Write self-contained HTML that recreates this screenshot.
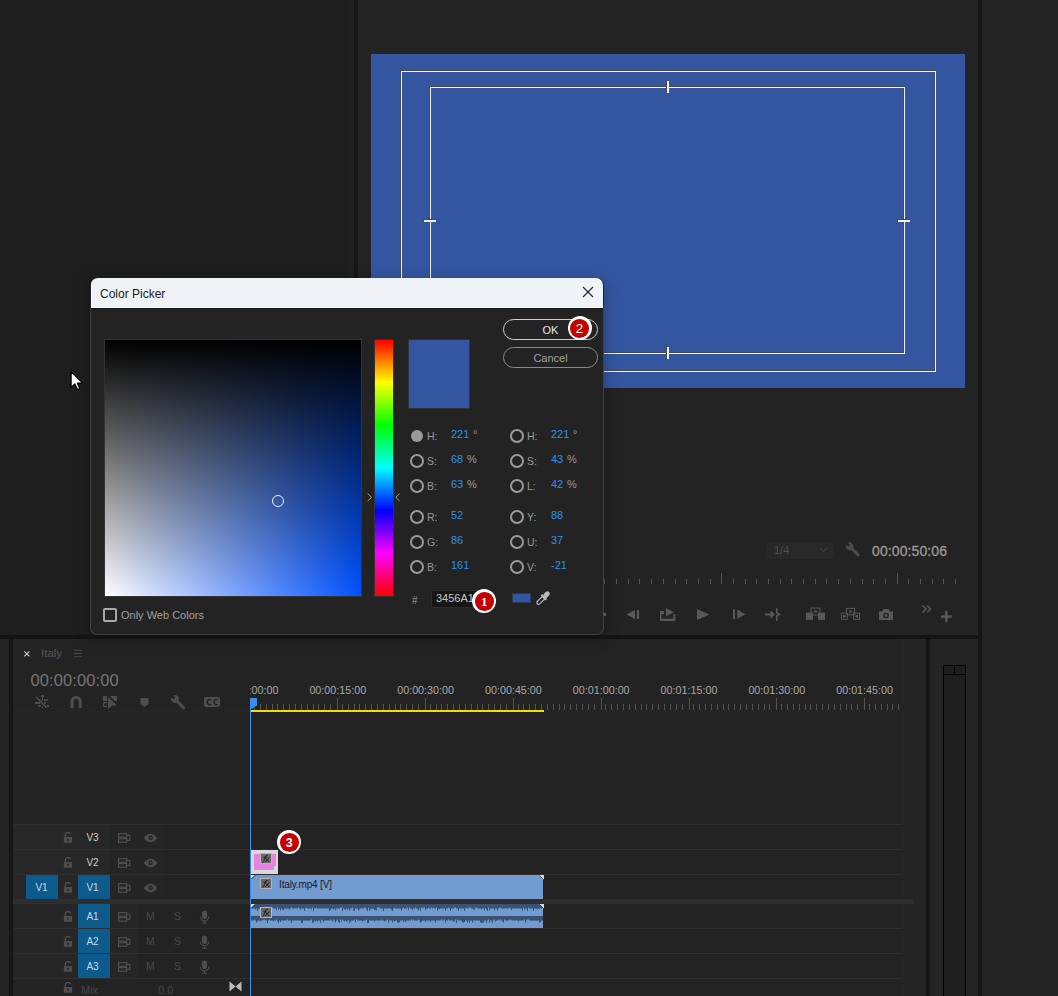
<!DOCTYPE html>
<html><head><meta charset="utf-8">
<style>
*{margin:0;padding:0;box-sizing:border-box}
html,body{width:1058px;height:996px;overflow:hidden;background:#1e1e1e;font-family:"Liberation Sans",sans-serif}
.a{position:absolute;white-space:nowrap}
</style></head>
<body>
<div class="a" style="left:0;top:0;width:354px;height:635px;background:#1e1e1e"></div>
<div class="a" style="left:349px;top:0;width:5px;height:635px;background:#202020"></div>
<div class="a" style="left:354px;top:0;width:4px;height:635px;background:#161616"></div>
<div class="a" style="left:358px;top:0;width:620px;height:635px;background:#232323"></div>
<div class="a" style="left:978px;top:0;width:4px;height:996px;background:#161616"></div>
<div class="a" style="left:982px;top:0;width:76px;height:996px;background:#232323"></div>
<div class="a" style="left:371px;top:54px;width:594px;height:334px;background:#3456a1"></div>
<div class="a" style="left:401px;top:71px;width:535px;height:301px;border:1px solid #f2f0ea;box-shadow:-1px -1px 0 #4a4a4a, inset -1px -1px 0 #4a4a4a"></div>
<div class="a" style="left:430px;top:87px;width:475px;height:267px;border:1px solid #f2f0ea;box-shadow:-1px -1px 0 #4a4a4a, inset -1px -1px 0 #4a4a4a"></div>
<div class="a" style="left:666px;top:80px;width:2px;height:12px;background:#4a4a4a"></div>
<div class="a" style="left:667px;top:81px;width:2px;height:12px;background:#f2f0ea"></div>
<div class="a" style="left:666px;top:346px;width:2px;height:12px;background:#4a4a4a"></div>
<div class="a" style="left:667px;top:347px;width:2px;height:12px;background:#f2f0ea"></div>
<div class="a" style="left:423px;top:219px;width:12px;height:2px;background:#4a4a4a"></div>
<div class="a" style="left:424px;top:220px;width:12px;height:2px;background:#f2f0ea"></div>
<div class="a" style="left:897px;top:219px;width:12px;height:2px;background:#4a4a4a"></div>
<div class="a" style="left:898px;top:220px;width:12px;height:2px;background:#f2f0ea"></div>
<div class="a" style="left:767px;top:542px;width:67px;height:17px;background:#282828;border-radius:2px"></div>
<div class="a" style="left:774px;top:543px;font-size:11px;line-height:15px;color:#505050">1/4</div>
<svg class="a" style="left:819px;top:547px" width="9" height="6" viewBox="0 0 9 6"><path d="M1 1L4.5 4.5L8 1" fill="none" stroke="#4a4a4a" stroke-width="1"/></svg>
<svg class="a" style="left:840px;top:536px" width="24" height="24" viewBox="840 536 24 24"><g transform="translate(849.6,546.4) rotate(-45)"><circle r="3.8" fill="#4c4c4c"/><rect x="-1.45" y="0" width="2.9" height="13.6" rx="1.4" fill="#4c4c4c"/><rect x="-1.35" y="-4.6" width="2.7" height="3.9" fill="#232323"/></g></svg>
<div class="a" style="left:872px;top:543px;font-size:14px;line-height:16px;color:#9a9a9a;-webkit-text-stroke:0.3px #9a9a9a;letter-spacing:0.1px">00:00:50:06</div>
<svg class="a" style="left:600px;top:570px" width="360" height="16" viewBox="600 570 360 16"><rect x="604" y="579" width="1" height="5" fill="#555"/><rect x="616" y="579" width="1" height="5" fill="#555"/><rect x="628" y="579" width="1" height="5" fill="#555"/><rect x="639" y="579" width="1" height="5" fill="#555"/><rect x="651" y="579" width="1" height="5" fill="#555"/><rect x="663" y="579" width="1" height="5" fill="#555"/><rect x="675" y="579" width="1" height="5" fill="#555"/><rect x="686" y="579" width="1" height="5" fill="#555"/><rect x="698" y="579" width="1" height="5" fill="#555"/><rect x="710" y="579" width="1" height="5" fill="#555"/><rect x="721" y="573" width="1" height="11" fill="#555"/><rect x="733" y="579" width="1" height="5" fill="#555"/><rect x="745" y="579" width="1" height="5" fill="#555"/><rect x="756" y="579" width="1" height="5" fill="#555"/><rect x="768" y="579" width="1" height="5" fill="#555"/><rect x="780" y="579" width="1" height="5" fill="#555"/><rect x="791" y="579" width="1" height="5" fill="#555"/><rect x="803" y="579" width="1" height="5" fill="#555"/><rect x="815" y="579" width="1" height="5" fill="#555"/><rect x="826" y="579" width="1" height="5" fill="#555"/><rect x="838" y="579" width="1" height="5" fill="#555"/><rect x="850" y="579" width="1" height="5" fill="#555"/><rect x="862" y="579" width="1" height="5" fill="#555"/><rect x="873" y="579" width="1" height="5" fill="#555"/><rect x="885" y="579" width="1" height="5" fill="#555"/><rect x="897" y="573" width="1" height="11" fill="#555"/><rect x="908" y="579" width="1" height="5" fill="#555"/><rect x="920" y="579" width="1" height="5" fill="#555"/><rect x="932" y="579" width="1" height="5" fill="#555"/><rect x="943" y="579" width="1" height="5" fill="#555"/><rect x="955" y="579" width="1" height="5" fill="#555"/></svg>
<svg class="a" style="left:600px;top:600px" width="360" height="30" viewBox="600 600 360 30" fill="#585858">
  <path d="M626.5 614.5L635 610V619Z"/><rect x="636.8" y="610" width="2.3" height="9"/>
  <path d="M660 611H664V614H661.6V618.8H673.4V614H675.3V621H660Z"/><path d="M666 608L674 612.2L666 616.3Z"/>
  <path d="M697 609L709.4 614.5L697 620Z"/>
  <rect x="733" y="609.5" width="2" height="9.5"/><path d="M737.3 609.5L745.3 614.3L737.3 619Z"/>
  <path d="M765 613.5H770.5V610.5L775 614.5L770.5 618.5V615.5H765Z"/><path d="M776.8 608.2V613L779.6 614.5L776.8 616V621" fill="none" stroke="#585858" stroke-width="1.6"/>
  <rect x="811" y="608" width="9" height="7" fill="none" stroke="#585858" stroke-width="1"/><path d="M815.5 609.7L818 612.5H813Z"/><rect x="806" y="612.6" width="7" height="7.3"/><rect x="818" y="612.6" width="7" height="7.3"/>
  <rect x="846.6" y="608.4" width="8" height="6.4" fill="none" stroke="#585858" stroke-width="1"/><path d="M850.6 609.8L852.8 612.6H848.4Z"/>
  <path d="M841.3 613.1H847.3V619.4H841.3Z M853.4 613.1H859.5V619.4H853.4Z" fill="none" stroke="#585858" stroke-width="1"/><path d="M842.8 614.4L846.6 616.3L842.8 618.2Z M858 614.4L854.2 616.3L858 618.2Z"/>
  <path d="M879 611.5H882L883.5 609H888.5L890 611.5H893V620H879Z"/><circle cx="886" cy="615.5" r="2.8" fill="#232323"/><circle cx="886" cy="615.5" r="1.4"/>
  <path d="M922.5 605.5L926 609L922.5 612.5 M927 605.5L930.5 609L927 612.5" fill="none" stroke="#585858" stroke-width="1.5"/>
  <rect x="941" y="615.3" width="10.8" height="2.5"/><rect x="945.1" y="610.8" width="2.5" height="11.4"/>
</svg>
<div class="a" style="left:0;top:635px;width:978px;height:4px;background:#141414"></div>
<div class="a" style="left:0;top:639px;width:9px;height:357px;background:#232323"></div>
<div class="a" style="left:9px;top:639px;width:4px;height:357px;background:#161616"></div>
<div class="a" style="left:13px;top:639px;width:913px;height:357px;background:#232323"></div>
<div class="a" style="left:902px;top:639px;width:24px;height:357px;background:#252525"></div>
<div class="a" style="left:13px;top:711px;width:890px;height:1px;background:#262626"></div>
<div class="a" style="left:926px;top:639px;width:4px;height:357px;background:#161616"></div>
<div class="a" style="left:930px;top:639px;width:48px;height:357px;background:#242424"></div>
<div class="a" style="left:943px;top:665px;width:23px;height:340px;background:#1e1e1e;border:1px solid #000"></div>
<div class="a" style="left:944px;top:674px;width:21px;height:1px;background:#000"></div>
<div class="a" style="left:954px;top:666px;width:1px;height:8px;background:#000"></div>
<svg class="a" style="left:22px;top:649px" width="10" height="10" viewBox="0 0 10 10"><path d="M2.4 2.4L7.4 7.4M7.4 2.4L2.4 7.4" stroke="#cfcfcf" stroke-width="1.1"/></svg>
<div class="a" style="left:41px;top:646px;font-size:11.5px;line-height:14px;color:#575757">Italy</div>
<svg class="a" style="left:73px;top:649px" width="10" height="9" viewBox="0 0 10 9"><path d="M1 1.3H9M1 4.5H9M1 7.7H9" stroke="#4c4c4c" stroke-width="0.9"/></svg>
<div class="a" style="left:30.5px;top:671px;font-size:16.5px;line-height:19px;color:#757575;letter-spacing:0.1px">00:00:00:00</div>
<svg class="a" style="left:30px;top:690px" width="200" height="22" viewBox="30 690 200 22" fill="#4e4e4e">
  <path d="M36.6 697.5L46.4 707.4" stroke="#4e4e4e" stroke-width="1.5" stroke-linecap="round"/>
  <rect x="41" y="695" width="3" height="2"/><rect x="42" y="697" width="1" height="4"/><rect x="44" y="699.2" width="4" height="1.6"/><rect x="35" y="702" width="5" height="2"/><rect x="44.2" y="702.3" width="1.7" height="1.7"/><rect x="38" y="705.2" width="2.8" height="1.7"/><rect x="42" y="706" width="1" height="2"/><rect x="46.9" y="705.2" width="2" height="1.7"/>
  <path d="M70.5 708V701.5A5.6 5.6 0 0 1 81.7 701.5V708H78.8V701.5A2.7 2.7 0 0 0 73.4 701.5V708Z"/>
  <rect x="103" y="696" width="4" height="5"/><path d="M103 702H107V703.4H104.2V705.7H107V707H103Z"/><path d="M109.6 696H117V701H114.9Z"/><path d="M108 697V709L112 705.6H117Z"/>
  <path d="M140.5 698H148.5V704L144.5 707L140.5 704Z"/>
  <g transform="translate(174.9,699) rotate(-45)"><circle r="3.8" fill="#4e4e4e"/><rect x="-1.45" y="0" width="2.9" height="14" rx="1.4" fill="#4e4e4e"/><rect x="-1.35" y="-4.6" width="2.7" height="3.9" fill="#232323"/></g>
  <rect x="204" y="697" width="16" height="10" rx="2"/>
  <path d="M211 699.8A2.6 2.6 0 1 0 211 704.4M217.7 699.8A2.6 2.6 0 1 0 217.7 704.4" fill="none" stroke="#232323" stroke-width="1.5"/>
</svg>
<svg class="a" style="left:250px;top:680px" width="653" height="32" viewBox="250 680 653 32"><rect x="250" y="698" width="1" height="12" fill="#555"/><rect x="337" y="698" width="1" height="12" fill="#555"/><rect x="425" y="698" width="1" height="12" fill="#555"/><rect x="513" y="698" width="1" height="12" fill="#555"/><rect x="601" y="698" width="1" height="12" fill="#555"/><rect x="689" y="698" width="1" height="12" fill="#555"/><rect x="776" y="698" width="1" height="12" fill="#555"/><rect x="864" y="698" width="1" height="12" fill="#555"/><rect x="254" y="704" width="1" height="6" fill="#555"/><rect x="260" y="704" width="1" height="6" fill="#555"/><rect x="266" y="704" width="1" height="6" fill="#555"/><rect x="272" y="704" width="1" height="6" fill="#555"/><rect x="277" y="704" width="1" height="6" fill="#555"/><rect x="283" y="704" width="1" height="6" fill="#555"/><rect x="289" y="704" width="1" height="6" fill="#555"/><rect x="295" y="704" width="1" height="6" fill="#555"/><rect x="301" y="704" width="1" height="6" fill="#555"/><rect x="307" y="704" width="1" height="6" fill="#555"/><rect x="313" y="704" width="1" height="6" fill="#555"/><rect x="318" y="704" width="1" height="6" fill="#555"/><rect x="324" y="704" width="1" height="6" fill="#555"/><rect x="330" y="704" width="1" height="6" fill="#555"/><rect x="342" y="704" width="1" height="6" fill="#555"/><rect x="348" y="704" width="1" height="6" fill="#555"/><rect x="354" y="704" width="1" height="6" fill="#555"/><rect x="359" y="704" width="1" height="6" fill="#555"/><rect x="365" y="704" width="1" height="6" fill="#555"/><rect x="371" y="704" width="1" height="6" fill="#555"/><rect x="377" y="704" width="1" height="6" fill="#555"/><rect x="383" y="704" width="1" height="6" fill="#555"/><rect x="389" y="704" width="1" height="6" fill="#555"/><rect x="395" y="704" width="1" height="6" fill="#555"/><rect x="400" y="704" width="1" height="6" fill="#555"/><rect x="406" y="704" width="1" height="6" fill="#555"/><rect x="412" y="704" width="1" height="6" fill="#555"/><rect x="418" y="704" width="1" height="6" fill="#555"/><rect x="430" y="704" width="1" height="6" fill="#555"/><rect x="436" y="704" width="1" height="6" fill="#555"/><rect x="441" y="704" width="1" height="6" fill="#555"/><rect x="447" y="704" width="1" height="6" fill="#555"/><rect x="453" y="704" width="1" height="6" fill="#555"/><rect x="459" y="704" width="1" height="6" fill="#555"/><rect x="465" y="704" width="1" height="6" fill="#555"/><rect x="471" y="704" width="1" height="6" fill="#555"/><rect x="477" y="704" width="1" height="6" fill="#555"/><rect x="482" y="704" width="1" height="6" fill="#555"/><rect x="488" y="704" width="1" height="6" fill="#555"/><rect x="494" y="704" width="1" height="6" fill="#555"/><rect x="500" y="704" width="1" height="6" fill="#555"/><rect x="506" y="704" width="1" height="6" fill="#555"/><rect x="518" y="704" width="1" height="6" fill="#555"/><rect x="523" y="704" width="1" height="6" fill="#555"/><rect x="529" y="704" width="1" height="6" fill="#555"/><rect x="535" y="704" width="1" height="6" fill="#555"/><rect x="541" y="704" width="1" height="6" fill="#555"/><rect x="547" y="704" width="1" height="6" fill="#555"/><rect x="553" y="704" width="1" height="6" fill="#555"/><rect x="559" y="704" width="1" height="6" fill="#555"/><rect x="564" y="704" width="1" height="6" fill="#555"/><rect x="570" y="704" width="1" height="6" fill="#555"/><rect x="576" y="704" width="1" height="6" fill="#555"/><rect x="582" y="704" width="1" height="6" fill="#555"/><rect x="588" y="704" width="1" height="6" fill="#555"/><rect x="594" y="704" width="1" height="6" fill="#555"/><rect x="605" y="704" width="1" height="6" fill="#555"/><rect x="611" y="704" width="1" height="6" fill="#555"/><rect x="617" y="704" width="1" height="6" fill="#555"/><rect x="623" y="704" width="1" height="6" fill="#555"/><rect x="629" y="704" width="1" height="6" fill="#555"/><rect x="635" y="704" width="1" height="6" fill="#555"/><rect x="641" y="704" width="1" height="6" fill="#555"/><rect x="646" y="704" width="1" height="6" fill="#555"/><rect x="652" y="704" width="1" height="6" fill="#555"/><rect x="658" y="704" width="1" height="6" fill="#555"/><rect x="664" y="704" width="1" height="6" fill="#555"/><rect x="670" y="704" width="1" height="6" fill="#555"/><rect x="676" y="704" width="1" height="6" fill="#555"/><rect x="682" y="704" width="1" height="6" fill="#555"/><rect x="693" y="704" width="1" height="6" fill="#555"/><rect x="699" y="704" width="1" height="6" fill="#555"/><rect x="705" y="704" width="1" height="6" fill="#555"/><rect x="711" y="704" width="1" height="6" fill="#555"/><rect x="717" y="704" width="1" height="6" fill="#555"/><rect x="723" y="704" width="1" height="6" fill="#555"/><rect x="728" y="704" width="1" height="6" fill="#555"/><rect x="734" y="704" width="1" height="6" fill="#555"/><rect x="740" y="704" width="1" height="6" fill="#555"/><rect x="746" y="704" width="1" height="6" fill="#555"/><rect x="752" y="704" width="1" height="6" fill="#555"/><rect x="758" y="704" width="1" height="6" fill="#555"/><rect x="764" y="704" width="1" height="6" fill="#555"/><rect x="769" y="704" width="1" height="6" fill="#555"/><rect x="781" y="704" width="1" height="6" fill="#555"/><rect x="787" y="704" width="1" height="6" fill="#555"/><rect x="793" y="704" width="1" height="6" fill="#555"/><rect x="799" y="704" width="1" height="6" fill="#555"/><rect x="805" y="704" width="1" height="6" fill="#555"/><rect x="810" y="704" width="1" height="6" fill="#555"/><rect x="816" y="704" width="1" height="6" fill="#555"/><rect x="822" y="704" width="1" height="6" fill="#555"/><rect x="828" y="704" width="1" height="6" fill="#555"/><rect x="834" y="704" width="1" height="6" fill="#555"/><rect x="840" y="704" width="1" height="6" fill="#555"/><rect x="846" y="704" width="1" height="6" fill="#555"/><rect x="851" y="704" width="1" height="6" fill="#555"/><rect x="857" y="704" width="1" height="6" fill="#555"/><rect x="869" y="704" width="1" height="6" fill="#555"/><rect x="875" y="704" width="1" height="6" fill="#555"/><rect x="881" y="704" width="1" height="6" fill="#555"/><rect x="887" y="704" width="1" height="6" fill="#555"/><rect x="892" y="704" width="1" height="6" fill="#555"/><rect x="898" y="704" width="1" height="6" fill="#555"/><defs><clipPath id="rc"><rect x="250" y="680" width="653" height="32"/></clipPath></defs><g clip-path="url(#rc)" font-family="Liberation Sans" font-size="10.75" fill="#a8a8a8" text-anchor="middle"><text x="250.0" y="694">00:00:00:00</text><text x="337.8" y="694">00:00:15:00</text><text x="425.6" y="694">00:00:30:00</text><text x="513.4" y="694">00:00:45:00</text><text x="601.2" y="694">00:01:00:00</text><text x="689.0" y="694">00:01:15:00</text><text x="776.8" y="694">00:01:30:00</text><text x="864.6" y="694">00:01:45:00</text></g></svg>
<div class="a" style="left:250px;top:698px;width:6.5px;height:8px;background:#3b8ef0;border-radius:1px 1px 0 0"></div>
<svg class="a" style="left:250px;top:705px" width="7" height="4" viewBox="0 0 7 4"><path d="M0 0H6.5L3 3.5H0Z" fill="#3b8ef0"/></svg>
<div class="a" style="left:251px;top:710px;width:293px;height:2px;background:#f0e000"></div>
<div class="a" style="left:13px;top:824px;width:889px;height:1px;background:#2e2e2e"></div><div class="a" style="left:13px;top:849px;width:889px;height:1px;background:#2e2e2e"></div><div class="a" style="left:13px;top:874px;width:889px;height:1px;background:#2e2e2e"></div><div class="a" style="left:13px;top:928px;width:889px;height:1px;background:#2e2e2e"></div><div class="a" style="left:13px;top:953px;width:889px;height:1px;background:#2e2e2e"></div><div class="a" style="left:13px;top:978px;width:889px;height:1px;background:#2e2e2e"></div><div class="a" style="left:13px;top:899px;width:901px;height:5px;background:#2e2e2e"></div>
<div class="a" style="left:13px;top:825px;width:97px;height:24px;background:#272727"></div><div class="a" style="left:110px;top:825px;width:54px;height:24px;background:#252525"></div><svg class="a" style="left:63px;top:832px" width="10" height="11" viewBox="0 0 10 11"><path d="M2.3 5V3A2.7 2.7 0 0 1 7.5 2.2" fill="none" stroke="#4e4e4e" stroke-width="1.4"/><rect x="0.8" y="5" width="8.3" height="5.8" fill="#4e4e4e"/><rect x="4.2" y="6.8" width="1.5" height="2" fill="#242424"/></svg><svg class="a" style="left:118px;top:833px" width="13" height="10" viewBox="0 0 13 10"><rect x="0.6" y="0.6" width="8" height="3.6" fill="none" stroke="#4e4e4e" stroke-width="1.2"/><rect x="0.6" y="5.6" width="8" height="3.6" fill="none" stroke="#4e4e4e" stroke-width="1.2"/><path d="M8.6 2.4H11.8V7.4H8.6" fill="none" stroke="#4e4e4e" stroke-width="1.2"/></svg><svg class="a" style="left:143px;top:833px" width="15" height="10" viewBox="0 0 15 10"><path d="M0.8 4.9Q7.6 -3.6 14.4 4.9Q7.6 13.4 0.8 4.9Z" fill="#4e4e4e"/><circle cx="7.6" cy="4.9" r="2.3" fill="#262626"/><circle cx="7.6" cy="4.9" r="0.8" fill="#4e4e4e"/></svg><div class="a" style="left:76.5px;top:826px;width:32px;height:24px;color:#d0d0d0;font-size:10px;line-height:24px;text-align:center;letter-spacing:-0.2px">V3</div>
<div class="a" style="left:13px;top:850px;width:97px;height:24px;background:#272727"></div><div class="a" style="left:110px;top:850px;width:54px;height:24px;background:#252525"></div><svg class="a" style="left:63px;top:857px" width="10" height="11" viewBox="0 0 10 11"><path d="M2.3 5V3A2.7 2.7 0 0 1 7.5 2.2" fill="none" stroke="#4e4e4e" stroke-width="1.4"/><rect x="0.8" y="5" width="8.3" height="5.8" fill="#4e4e4e"/><rect x="4.2" y="6.8" width="1.5" height="2" fill="#242424"/></svg><svg class="a" style="left:118px;top:858px" width="13" height="10" viewBox="0 0 13 10"><rect x="0.6" y="0.6" width="8" height="3.6" fill="none" stroke="#4e4e4e" stroke-width="1.2"/><rect x="0.6" y="5.6" width="8" height="3.6" fill="none" stroke="#4e4e4e" stroke-width="1.2"/><path d="M8.6 2.4H11.8V7.4H8.6" fill="none" stroke="#4e4e4e" stroke-width="1.2"/></svg><svg class="a" style="left:143px;top:858px" width="15" height="10" viewBox="0 0 15 10"><path d="M0.8 4.9Q7.6 -3.6 14.4 4.9Q7.6 13.4 0.8 4.9Z" fill="#4e4e4e"/><circle cx="7.6" cy="4.9" r="2.3" fill="#262626"/><circle cx="7.6" cy="4.9" r="0.8" fill="#4e4e4e"/></svg><div class="a" style="left:76.5px;top:851px;width:32px;height:24px;color:#d0d0d0;font-size:10px;line-height:24px;text-align:center;letter-spacing:-0.2px">V2</div>
<div class="a" style="left:13px;top:875px;width:97px;height:24px;background:#272727"></div><div class="a" style="left:110px;top:875px;width:54px;height:24px;background:#252525"></div><svg class="a" style="left:63px;top:882px" width="10" height="11" viewBox="0 0 10 11"><path d="M2.3 5V3A2.7 2.7 0 0 1 7.5 2.2" fill="none" stroke="#4e4e4e" stroke-width="1.4"/><rect x="0.8" y="5" width="8.3" height="5.8" fill="#4e4e4e"/><rect x="4.2" y="6.8" width="1.5" height="2" fill="#242424"/></svg><svg class="a" style="left:118px;top:883px" width="13" height="10" viewBox="0 0 13 10"><rect x="0.6" y="0.6" width="8" height="3.6" fill="none" stroke="#4e4e4e" stroke-width="1.2"/><rect x="0.6" y="5.6" width="8" height="3.6" fill="none" stroke="#4e4e4e" stroke-width="1.2"/><path d="M8.6 2.4H11.8V7.4H8.6" fill="none" stroke="#4e4e4e" stroke-width="1.2"/></svg><svg class="a" style="left:143px;top:883px" width="15" height="10" viewBox="0 0 15 10"><path d="M0.8 4.9Q7.6 -3.6 14.4 4.9Q7.6 13.4 0.8 4.9Z" fill="#4e4e4e"/><circle cx="7.6" cy="4.9" r="2.3" fill="#262626"/><circle cx="7.6" cy="4.9" r="0.8" fill="#4e4e4e"/></svg><div class="a" style="left:26px;top:875px;width:32px;height:24px;background:#0d5a8c"></div><div class="a" style="left:25.5px;top:876px;width:32px;height:24px;color:#c9d9e8;font-size:10px;line-height:24px;text-align:center;letter-spacing:-0.2px">V1</div><div class="a" style="left:78px;top:875px;width:32px;height:24px;background:#0d5a8c"></div><div class="a" style="left:76.5px;top:876px;width:32px;height:24px;color:#c9d9e8;font-size:10px;line-height:24px;text-align:center;letter-spacing:-0.2px">V1</div>
<div class="a" style="left:13px;top:904px;width:124px;height:24px;background:#262626"></div><div class="a" style="left:137px;top:904px;width:112px;height:24px;background:#232323"></div><svg class="a" style="left:63px;top:911px" width="10" height="11" viewBox="0 0 10 11"><path d="M2.3 5V3A2.7 2.7 0 0 1 7.5 2.2" fill="none" stroke="#4e4e4e" stroke-width="1.4"/><rect x="0.8" y="5" width="8.3" height="5.8" fill="#4e4e4e"/><rect x="4.2" y="6.8" width="1.5" height="2" fill="#242424"/></svg><svg class="a" style="left:118px;top:912px" width="13" height="10" viewBox="0 0 13 10"><rect x="0.6" y="0.6" width="8" height="3.6" fill="none" stroke="#4e4e4e" stroke-width="1.2"/><rect x="0.6" y="5.6" width="8" height="3.6" fill="none" stroke="#4e4e4e" stroke-width="1.2"/><path d="M8.6 2.4H11.8V7.4H8.6" fill="none" stroke="#4e4e4e" stroke-width="1.2"/></svg><svg class="a" style="left:199px;top:910px" width="11" height="14" viewBox="0 0 11 14"><rect x="3" y="0.5" width="5" height="8.5" rx="2.5" fill="#4e4e4e"/><path d="M1.2 6.5A4.3 4.3 0 0 0 9.8 6.5" fill="none" stroke="#4e4e4e" stroke-width="1.1"/><path d="M5.5 10.8V13.2M3 13.2H8" stroke="#4e4e4e" stroke-width="1.1"/></svg><div class="a" style="left:78px;top:904px;width:32px;height:24px;background:#0d5a8c"></div><div class="a" style="left:76.5px;top:905px;width:32px;height:24px;color:#c9d9e8;font-size:10px;line-height:24px;text-align:center;letter-spacing:-0.2px">A1</div><div class="a" style="left:146px;top:909px;font-size:10.5px;line-height:14px;color:#4a4a4a">M</div><div class="a" style="left:174px;top:909px;font-size:10.5px;line-height:14px;color:#4a4a4a">S</div>
<div class="a" style="left:13px;top:929px;width:124px;height:24px;background:#262626"></div><div class="a" style="left:137px;top:929px;width:112px;height:24px;background:#232323"></div><svg class="a" style="left:63px;top:936px" width="10" height="11" viewBox="0 0 10 11"><path d="M2.3 5V3A2.7 2.7 0 0 1 7.5 2.2" fill="none" stroke="#4e4e4e" stroke-width="1.4"/><rect x="0.8" y="5" width="8.3" height="5.8" fill="#4e4e4e"/><rect x="4.2" y="6.8" width="1.5" height="2" fill="#242424"/></svg><svg class="a" style="left:118px;top:937px" width="13" height="10" viewBox="0 0 13 10"><rect x="0.6" y="0.6" width="8" height="3.6" fill="none" stroke="#4e4e4e" stroke-width="1.2"/><rect x="0.6" y="5.6" width="8" height="3.6" fill="none" stroke="#4e4e4e" stroke-width="1.2"/><path d="M8.6 2.4H11.8V7.4H8.6" fill="none" stroke="#4e4e4e" stroke-width="1.2"/></svg><svg class="a" style="left:199px;top:935px" width="11" height="14" viewBox="0 0 11 14"><rect x="3" y="0.5" width="5" height="8.5" rx="2.5" fill="#4e4e4e"/><path d="M1.2 6.5A4.3 4.3 0 0 0 9.8 6.5" fill="none" stroke="#4e4e4e" stroke-width="1.1"/><path d="M5.5 10.8V13.2M3 13.2H8" stroke="#4e4e4e" stroke-width="1.1"/></svg><div class="a" style="left:78px;top:929px;width:32px;height:24px;background:#0d5a8c"></div><div class="a" style="left:76.5px;top:930px;width:32px;height:24px;color:#c9d9e8;font-size:10px;line-height:24px;text-align:center;letter-spacing:-0.2px">A2</div><div class="a" style="left:146px;top:934px;font-size:10.5px;line-height:14px;color:#4a4a4a">M</div><div class="a" style="left:174px;top:934px;font-size:10.5px;line-height:14px;color:#4a4a4a">S</div>
<div class="a" style="left:13px;top:954px;width:124px;height:24px;background:#262626"></div><div class="a" style="left:137px;top:954px;width:112px;height:24px;background:#232323"></div><svg class="a" style="left:63px;top:961px" width="10" height="11" viewBox="0 0 10 11"><path d="M2.3 5V3A2.7 2.7 0 0 1 7.5 2.2" fill="none" stroke="#4e4e4e" stroke-width="1.4"/><rect x="0.8" y="5" width="8.3" height="5.8" fill="#4e4e4e"/><rect x="4.2" y="6.8" width="1.5" height="2" fill="#242424"/></svg><svg class="a" style="left:118px;top:962px" width="13" height="10" viewBox="0 0 13 10"><rect x="0.6" y="0.6" width="8" height="3.6" fill="none" stroke="#4e4e4e" stroke-width="1.2"/><rect x="0.6" y="5.6" width="8" height="3.6" fill="none" stroke="#4e4e4e" stroke-width="1.2"/><path d="M8.6 2.4H11.8V7.4H8.6" fill="none" stroke="#4e4e4e" stroke-width="1.2"/></svg><svg class="a" style="left:199px;top:960px" width="11" height="14" viewBox="0 0 11 14"><rect x="3" y="0.5" width="5" height="8.5" rx="2.5" fill="#4e4e4e"/><path d="M1.2 6.5A4.3 4.3 0 0 0 9.8 6.5" fill="none" stroke="#4e4e4e" stroke-width="1.1"/><path d="M5.5 10.8V13.2M3 13.2H8" stroke="#4e4e4e" stroke-width="1.1"/></svg><div class="a" style="left:78px;top:954px;width:32px;height:24px;background:#0d5a8c"></div><div class="a" style="left:76.5px;top:955px;width:32px;height:24px;color:#c9d9e8;font-size:10px;line-height:24px;text-align:center;letter-spacing:-0.2px">A3</div><div class="a" style="left:146px;top:959px;font-size:10.5px;line-height:14px;color:#4a4a4a">M</div><div class="a" style="left:174px;top:959px;font-size:10.5px;line-height:14px;color:#4a4a4a">S</div>
<svg class="a" style="left:63px;top:982px" width="10" height="11" viewBox="0 0 10 11"><path d="M2.3 5V3A2.7 2.7 0 0 1 7.5 2.2" fill="none" stroke="#4e4e4e" stroke-width="1.4"/><rect x="0.8" y="5" width="8.3" height="5.8" fill="#4e4e4e"/><rect x="4.2" y="6.8" width="1.5" height="2" fill="#242424"/></svg><div class="a" style="left:81px;top:983px;font-size:11px;line-height:14px;color:#4a4a4a">Mix</div><div class="a" style="left:158px;top:983px;font-size:11px;line-height:14px;color:#4a4a4a">0.0</div><svg class="a" style="left:229px;top:981px" width="13" height="11" viewBox="0 0 13 11"><path d="M0.5 0.5L6.5 5.5L0.5 10.5Z M12.5 0.5L6.5 5.5L12.5 10.5Z" fill="#bdbdbd"/></svg>
<div class="a" style="left:251px;top:850px;width:27px;height:24px;background:#d9d9d9"></div><div class="a" style="left:254px;top:854px;width:22px;height:16px;background:#e683e0"></div><div class="a" style="left:274px;top:866px;width:2px;height:4px;background:#d9d9d9"></div><div class="a" style="left:260px;top:853px;width:12px;height:11px;background:#686868;border:1px solid #bdb5ad"></div><svg class="a" style="left:260px;top:853px" width="12" height="11" viewBox="0 0 12 11"><g fill="none" stroke="#222" stroke-width="0.95"><path d="M2.2 10 Q3.8 9.8 4.6 5.5 Q5.4 1.8 7.8 2.2"/><path d="M3.5 4.3H6.5"/><path d="M5 4.6L9 8.8M5.3 8.8L9.5 4.3"/></g></svg>
<div class="a" style="left:251px;top:875px;width:292px;height:24px;background:#729bd0"></div><svg class="a" style="left:251px;top:875px" width="5" height="5" viewBox="0 0 5 5"><path d="M0 0H4.3L0 4.3Z" fill="#e0e0e0"/><path d="M0.2 4.3L4.3 0.2" stroke="#1e1e1e" stroke-width="0.9"/></svg><svg class="a" style="left:539px;top:875px" width="5" height="5" viewBox="0 0 5 5"><path d="M0.3 0H5V4.7Z" fill="#d8d8d8"/><path d="M0.3 0.3L4.7 4.7" stroke="#333" stroke-width="0.6"/></svg><div class="a" style="left:260px;top:878px;width:12px;height:11px;background:#686868;border:1px solid #bdb5ad"></div><svg class="a" style="left:260px;top:878px" width="12" height="11" viewBox="0 0 12 11"><g fill="none" stroke="#222" stroke-width="0.95"><path d="M2.2 10 Q3.8 9.8 4.6 5.5 Q5.4 1.8 7.8 2.2"/><path d="M3.5 4.3H6.5"/><path d="M5 4.6L9 8.8M5.3 8.8L9.5 4.3"/></g></svg><div class="a" style="left:279px;top:878px;font-size:10px;line-height:14px;color:#1a1a28;letter-spacing:-0.15px">Italy.mp4 [V]</div>
<svg class="a" style="left:251px;top:904px" width="292" height="24" viewBox="251 904 292 24"><rect x="251" y="904" width="292" height="24" fill="#729bd0"/><path d="M251.0 904.0 L543.0 904.0 L543.0 907.6 L542.0 907.6 L542.0 908.4 L541.0 908.4 L541.0 908.4 L540.0 908.4 L540.0 908.4 L539.0 908.4 L539.0 908.4 L538.0 908.4 L538.0 909.4 L537.0 909.4 L537.0 908.4 L536.0 908.4 L536.0 908.4 L535.0 908.4 L535.0 908.4 L534.0 908.4 L534.0 910.9 L533.0 910.9 L533.0 908.4 L532.0 908.4 L532.0 908.4 L531.0 908.4 L531.0 908.4 L530.0 908.4 L530.0 908.4 L529.0 908.4 L529.0 907.6 L528.0 907.6 L528.0 910.9 L527.0 910.9 L527.0 908.4 L526.0 908.4 L526.0 908.4 L525.0 908.4 L525.0 909.4 L524.0 909.4 L524.0 907.6 L523.0 907.6 L523.0 910.4 L522.0 910.4 L522.0 908.4 L521.0 908.4 L521.0 908.4 L520.0 908.4 L520.0 908.4 L519.0 908.4 L519.0 908.4 L518.0 908.4 L518.0 908.4 L517.0 908.4 L517.0 908.4 L516.0 908.4 L516.0 908.4 L515.0 908.4 L515.0 908.4 L514.0 908.4 L514.0 908.4 L513.0 908.4 L513.0 908.4 L512.0 908.4 L512.0 909.9 L511.0 909.9 L511.0 908.4 L510.0 908.4 L510.0 907.6 L509.0 907.6 L509.0 908.4 L508.0 908.4 L508.0 908.4 L507.0 908.4 L507.0 908.4 L506.0 908.4 L506.0 908.4 L505.0 908.4 L505.0 908.4 L504.0 908.4 L504.0 908.4 L503.0 908.4 L503.0 908.4 L502.0 908.4 L502.0 908.4 L501.0 908.4 L501.0 907.6 L500.0 907.6 L500.0 907.6 L499.0 907.6 L499.0 908.4 L498.0 908.4 L498.0 910.4 L497.0 910.4 L497.0 908.4 L496.0 908.4 L496.0 908.4 L495.0 908.4 L495.0 910.4 L494.0 910.4 L494.0 908.4 L493.0 908.4 L493.0 908.4 L492.0 908.4 L492.0 908.4 L491.0 908.4 L491.0 908.4 L490.0 908.4 L490.0 910.4 L489.0 910.4 L489.0 907.6 L488.0 907.6 L488.0 910.9 L487.0 910.9 L487.0 909.4 L486.0 909.4 L486.0 908.4 L485.0 908.4 L485.0 910.4 L484.0 910.4 L484.0 908.4 L483.0 908.4 L483.0 908.4 L482.0 908.4 L482.0 909.4 L481.0 909.4 L481.0 908.4 L480.0 908.4 L480.0 908.4 L479.0 908.4 L479.0 908.4 L478.0 908.4 L478.0 908.4 L477.0 908.4 L477.0 907.6 L476.0 907.6 L476.0 907.6 L475.0 907.6 L475.0 909.4 L474.0 909.4 L474.0 909.4 L473.0 909.4 L473.0 908.4 L472.0 908.4 L472.0 908.4 L471.0 908.4 L471.0 907.6 L470.0 907.6 L470.0 907.6 L469.0 907.6 L469.0 908.4 L468.0 908.4 L468.0 908.4 L467.0 908.4 L467.0 907.6 L466.0 907.6 L466.0 908.4 L465.0 908.4 L465.0 910.9 L464.0 910.9 L464.0 908.4 L463.0 908.4 L463.0 908.4 L462.0 908.4 L462.0 908.4 L461.0 908.4 L461.0 908.4 L460.0 908.4 L460.0 908.4 L459.0 908.4 L459.0 910.4 L458.0 910.4 L458.0 908.4 L457.0 908.4 L457.0 908.4 L456.0 908.4 L456.0 907.6 L455.0 907.6 L455.0 907.6 L454.0 907.6 L454.0 908.4 L453.0 908.4 L453.0 908.4 L452.0 908.4 L452.0 908.4 L451.0 908.4 L451.0 910.9 L450.0 910.9 L450.0 908.4 L449.0 908.4 L449.0 907.6 L448.0 907.6 L448.0 908.4 L447.0 908.4 L447.0 908.4 L446.0 908.4 L446.0 910.4 L445.0 910.4 L445.0 908.4 L444.0 908.4 L444.0 908.4 L443.0 908.4 L443.0 908.4 L442.0 908.4 L442.0 908.4 L441.0 908.4 L441.0 908.4 L440.0 908.4 L440.0 909.4 L439.0 909.4 L439.0 908.4 L438.0 908.4 L438.0 910.4 L437.0 910.4 L437.0 907.6 L436.0 907.6 L436.0 908.4 L435.0 908.4 L435.0 908.4 L434.0 908.4 L434.0 907.6 L433.0 907.6 L433.0 908.4 L432.0 908.4 L432.0 907.6 L431.0 907.6 L431.0 908.4 L430.0 908.4 L430.0 908.4 L429.0 908.4 L429.0 907.6 L428.0 907.6 L428.0 908.4 L427.0 908.4 L427.0 908.4 L426.0 908.4 L426.0 909.9 L425.0 909.9 L425.0 907.6 L424.0 907.6 L424.0 907.6 L423.0 907.6 L423.0 908.4 L422.0 908.4 L422.0 907.6 L421.0 907.6 L421.0 910.9 L420.0 910.9 L420.0 908.4 L419.0 908.4 L419.0 910.4 L418.0 910.4 L418.0 908.4 L417.0 908.4 L417.0 908.4 L416.0 908.4 L416.0 907.6 L415.0 907.6 L415.0 908.4 L414.0 908.4 L414.0 908.4 L413.0 908.4 L413.0 909.9 L412.0 909.9 L412.0 908.4 L411.0 908.4 L411.0 908.4 L410.0 908.4 L410.0 907.6 L409.0 907.6 L409.0 909.9 L408.0 909.9 L408.0 907.6 L407.0 907.6 L407.0 908.4 L406.0 908.4 L406.0 908.4 L405.0 908.4 L405.0 908.4 L404.0 908.4 L404.0 907.6 L403.0 907.6 L403.0 908.4 L402.0 908.4 L402.0 910.4 L401.0 910.4 L401.0 908.4 L400.0 908.4 L400.0 908.4 L399.0 908.4 L399.0 908.4 L398.0 908.4 L398.0 908.4 L397.0 908.4 L397.0 908.4 L396.0 908.4 L396.0 908.4 L395.0 908.4 L395.0 907.6 L394.0 907.6 L394.0 908.4 L393.0 908.4 L393.0 910.9 L392.0 910.9 L392.0 909.4 L391.0 909.4 L391.0 908.4 L390.0 908.4 L390.0 908.4 L389.0 908.4 L389.0 908.4 L388.0 908.4 L388.0 908.4 L387.0 908.4 L387.0 908.4 L386.0 908.4 L386.0 908.4 L385.0 908.4 L385.0 908.4 L384.0 908.4 L384.0 910.9 L383.0 910.9 L383.0 908.4 L382.0 908.4 L382.0 908.4 L381.0 908.4 L381.0 908.4 L380.0 908.4 L380.0 907.6 L379.0 907.6 L379.0 907.6 L378.0 907.6 L378.0 907.6 L377.0 907.6 L377.0 910.4 L376.0 910.4 L376.0 909.9 L375.0 909.9 L375.0 909.9 L374.0 909.9 L374.0 908.4 L373.0 908.4 L373.0 908.4 L372.0 908.4 L372.0 908.4 L371.0 908.4 L371.0 909.4 L370.0 909.4 L370.0 910.4 L369.0 910.4 L369.0 907.6 L368.0 907.6 L368.0 910.9 L367.0 910.9 L367.0 909.4 L366.0 909.4 L366.0 907.6 L365.0 907.6 L365.0 907.6 L364.0 907.6 L364.0 908.4 L363.0 908.4 L363.0 908.4 L362.0 908.4 L362.0 908.4 L361.0 908.4 L361.0 908.4 L360.0 908.4 L360.0 909.4 L359.0 909.4 L359.0 910.4 L358.0 910.4 L358.0 908.4 L357.0 908.4 L357.0 908.4 L356.0 908.4 L356.0 908.4 L355.0 908.4 L355.0 910.9 L354.0 910.9 L354.0 910.4 L353.0 910.4 L353.0 907.6 L352.0 907.6 L352.0 908.4 L351.0 908.4 L351.0 908.4 L350.0 908.4 L350.0 910.4 L349.0 910.4 L349.0 908.4 L348.0 908.4 L348.0 909.4 L347.0 909.4 L347.0 908.4 L346.0 908.4 L346.0 909.4 L345.0 909.4 L345.0 909.4 L344.0 909.4 L344.0 908.4 L343.0 908.4 L343.0 910.9 L342.0 910.9 L342.0 907.6 L341.0 907.6 L341.0 907.6 L340.0 907.6 L340.0 908.4 L339.0 908.4 L339.0 908.4 L338.0 908.4 L338.0 908.4 L337.0 908.4 L337.0 908.4 L336.0 908.4 L336.0 910.4 L335.0 910.4 L335.0 908.4 L334.0 908.4 L334.0 909.4 L333.0 909.4 L333.0 908.4 L332.0 908.4 L332.0 908.4 L331.0 908.4 L331.0 909.9 L330.0 909.9 L330.0 910.9 L329.0 910.9 L329.0 908.4 L328.0 908.4 L328.0 908.4 L327.0 908.4 L327.0 908.4 L326.0 908.4 L326.0 908.4 L325.0 908.4 L325.0 908.4 L324.0 908.4 L324.0 908.4 L323.0 908.4 L323.0 908.4 L322.0 908.4 L322.0 908.4 L321.0 908.4 L321.0 908.4 L320.0 908.4 L320.0 908.4 L319.0 908.4 L319.0 908.4 L318.0 908.4 L318.0 908.4 L317.0 908.4 L317.0 907.6 L316.0 907.6 L316.0 908.4 L315.0 908.4 L315.0 908.4 L314.0 908.4 L314.0 910.9 L313.0 910.9 L313.0 907.6 L312.0 907.6 L312.0 909.4 L311.0 909.4 L311.0 908.4 L310.0 908.4 L310.0 908.4 L309.0 908.4 L309.0 908.4 L308.0 908.4 L308.0 908.4 L307.0 908.4 L307.0 907.6 L306.0 907.6 L306.0 908.4 L305.0 908.4 L305.0 910.9 L304.0 910.9 L304.0 908.4 L303.0 908.4 L303.0 908.4 L302.0 908.4 L302.0 908.4 L301.0 908.4 L301.0 909.4 L300.0 909.4 L300.0 908.4 L299.0 908.4 L299.0 907.6 L298.0 907.6 L298.0 908.4 L297.0 908.4 L297.0 908.4 L296.0 908.4 L296.0 908.4 L295.0 908.4 L295.0 908.4 L294.0 908.4 L294.0 908.4 L293.0 908.4 L293.0 908.4 L292.0 908.4 L292.0 907.6 L291.0 907.6 L291.0 908.4 L290.0 908.4 L290.0 909.4 L289.0 909.4 L289.0 908.4 L288.0 908.4 L288.0 908.4 L287.0 908.4 L287.0 908.4 L286.0 908.4 L286.0 908.4 L285.0 908.4 L285.0 908.4 L284.0 908.4 L284.0 909.9 L283.0 909.9 L283.0 909.4 L282.0 909.4 L282.0 908.4 L281.0 908.4 L281.0 910.4 L280.0 910.4 L280.0 908.4 L279.0 908.4 L279.0 909.4 L278.0 909.4 L278.0 907.6 L277.0 907.6 L277.0 909.9 L276.0 909.9 L276.0 908.4 L275.0 908.4 L275.0 908.4 L274.0 908.4 L274.0 908.4 L273.0 908.4 L273.0 907.6 L272.0 907.6 L272.0 908.4 L271.0 908.4 L271.0 908.4 L270.0 908.4 L270.0 908.4 L269.0 908.4 L269.0 908.4 L268.0 908.4 L268.0 908.4 L267.0 908.4 L267.0 907.6 L266.0 907.6 L266.0 908.4 L265.0 908.4 L265.0 908.4 L264.0 908.4 L264.0 908.4 L263.0 908.4 L263.0 908.4 L262.0 908.4 L262.0 908.4 L261.0 908.4 L261.0 908.4 L260.0 908.4 L260.0 908.4 L259.0 908.4 L259.0 908.4 L258.0 908.4 L258.0 910.9 L257.0 910.9 L257.0 908.4 L256.0 908.4 L256.0 909.4 L255.0 909.4 L255.0 908.4 L254.0 908.4 L254.0 908.4 L253.0 908.4 L253.0 908.4 L252.0 908.4 L252.0 908.4 L251.0 908.4 L251.0 908.4Z" fill="#3b5275"/><path d="M251.0 916.0 L543.0 916.0 L543.0 920.4 L542.0 920.4 L542.0 920.4 L541.0 920.4 L541.0 921.9 L540.0 921.9 L540.0 922.4 L539.0 922.4 L539.0 920.4 L538.0 920.4 L538.0 920.4 L537.0 920.4 L537.0 920.4 L536.0 920.4 L536.0 920.4 L535.0 920.4 L535.0 920.4 L534.0 920.4 L534.0 920.4 L533.0 920.4 L533.0 920.4 L532.0 920.4 L532.0 920.4 L531.0 920.4 L531.0 920.4 L530.0 920.4 L530.0 920.4 L529.0 920.4 L529.0 919.6 L528.0 919.6 L528.0 919.6 L527.0 919.6 L527.0 920.4 L526.0 920.4 L526.0 922.4 L525.0 922.4 L525.0 919.6 L524.0 919.6 L524.0 920.4 L523.0 920.4 L523.0 920.4 L522.0 920.4 L522.0 920.4 L521.0 920.4 L521.0 920.4 L520.0 920.4 L520.0 920.4 L519.0 920.4 L519.0 921.4 L518.0 921.4 L518.0 920.4 L517.0 920.4 L517.0 920.4 L516.0 920.4 L516.0 920.4 L515.0 920.4 L515.0 920.4 L514.0 920.4 L514.0 920.4 L513.0 920.4 L513.0 920.4 L512.0 920.4 L512.0 920.4 L511.0 920.4 L511.0 919.6 L510.0 919.6 L510.0 919.6 L509.0 919.6 L509.0 920.4 L508.0 920.4 L508.0 920.4 L507.0 920.4 L507.0 920.4 L506.0 920.4 L506.0 920.4 L505.0 920.4 L505.0 919.6 L504.0 919.6 L504.0 922.4 L503.0 922.4 L503.0 921.4 L502.0 921.4 L502.0 920.4 L501.0 920.4 L501.0 919.6 L500.0 919.6 L500.0 920.4 L499.0 920.4 L499.0 919.6 L498.0 919.6 L498.0 920.4 L497.0 920.4 L497.0 920.4 L496.0 920.4 L496.0 921.4 L495.0 921.4 L495.0 919.6 L494.0 919.6 L494.0 920.4 L493.0 920.4 L493.0 922.9 L492.0 922.9 L492.0 920.4 L491.0 920.4 L491.0 920.4 L490.0 920.4 L490.0 922.4 L489.0 922.4 L489.0 919.6 L488.0 919.6 L488.0 920.4 L487.0 920.4 L487.0 922.9 L486.0 922.9 L486.0 920.4 L485.0 920.4 L485.0 920.4 L484.0 920.4 L484.0 922.4 L483.0 922.4 L483.0 922.9 L482.0 922.9 L482.0 922.4 L481.0 922.4 L481.0 922.4 L480.0 922.4 L480.0 920.4 L479.0 920.4 L479.0 920.4 L478.0 920.4 L478.0 920.4 L477.0 920.4 L477.0 920.4 L476.0 920.4 L476.0 920.4 L475.0 920.4 L475.0 920.4 L474.0 920.4 L474.0 920.4 L473.0 920.4 L473.0 922.4 L472.0 922.4 L472.0 920.4 L471.0 920.4 L471.0 920.4 L470.0 920.4 L470.0 922.9 L469.0 922.9 L469.0 920.4 L468.0 920.4 L468.0 922.4 L467.0 922.4 L467.0 920.4 L466.0 920.4 L466.0 920.4 L465.0 920.4 L465.0 921.9 L464.0 921.9 L464.0 922.9 L463.0 922.9 L463.0 921.9 L462.0 921.9 L462.0 920.4 L461.0 920.4 L461.0 920.4 L460.0 920.4 L460.0 920.4 L459.0 920.4 L459.0 920.4 L458.0 920.4 L458.0 919.6 L457.0 919.6 L457.0 922.9 L456.0 922.9 L456.0 919.6 L455.0 919.6 L455.0 921.4 L454.0 921.4 L454.0 921.9 L453.0 921.9 L453.0 920.4 L452.0 920.4 L452.0 920.4 L451.0 920.4 L451.0 920.4 L450.0 920.4 L450.0 920.4 L449.0 920.4 L449.0 919.6 L448.0 919.6 L448.0 920.4 L447.0 920.4 L447.0 920.4 L446.0 920.4 L446.0 922.4 L445.0 922.4 L445.0 919.6 L444.0 919.6 L444.0 920.4 L443.0 920.4 L443.0 920.4 L442.0 920.4 L442.0 919.6 L441.0 919.6 L441.0 920.4 L440.0 920.4 L440.0 920.4 L439.0 920.4 L439.0 920.4 L438.0 920.4 L438.0 920.4 L437.0 920.4 L437.0 920.4 L436.0 920.4 L436.0 922.4 L435.0 922.4 L435.0 920.4 L434.0 920.4 L434.0 920.4 L433.0 920.4 L433.0 920.4 L432.0 920.4 L432.0 920.4 L431.0 920.4 L431.0 921.9 L430.0 921.9 L430.0 920.4 L429.0 920.4 L429.0 920.4 L428.0 920.4 L428.0 920.4 L427.0 920.4 L427.0 920.4 L426.0 920.4 L426.0 921.9 L425.0 921.9 L425.0 920.4 L424.0 920.4 L424.0 920.4 L423.0 920.4 L423.0 920.4 L422.0 920.4 L422.0 921.9 L421.0 921.9 L421.0 922.4 L420.0 922.4 L420.0 920.4 L419.0 920.4 L419.0 919.6 L418.0 919.6 L418.0 920.4 L417.0 920.4 L417.0 920.4 L416.0 920.4 L416.0 920.4 L415.0 920.4 L415.0 920.4 L414.0 920.4 L414.0 919.6 L413.0 919.6 L413.0 920.4 L412.0 920.4 L412.0 919.6 L411.0 919.6 L411.0 920.4 L410.0 920.4 L410.0 920.4 L409.0 920.4 L409.0 920.4 L408.0 920.4 L408.0 920.4 L407.0 920.4 L407.0 920.4 L406.0 920.4 L406.0 921.9 L405.0 921.9 L405.0 920.4 L404.0 920.4 L404.0 921.9 L403.0 921.9 L403.0 920.4 L402.0 920.4 L402.0 920.4 L401.0 920.4 L401.0 920.4 L400.0 920.4 L400.0 921.9 L399.0 921.9 L399.0 922.9 L398.0 922.9 L398.0 922.4 L397.0 922.4 L397.0 920.4 L396.0 920.4 L396.0 920.4 L395.0 920.4 L395.0 921.4 L394.0 921.4 L394.0 920.4 L393.0 920.4 L393.0 922.4 L392.0 922.4 L392.0 920.4 L391.0 920.4 L391.0 920.4 L390.0 920.4 L390.0 920.4 L389.0 920.4 L389.0 922.4 L388.0 922.4 L388.0 919.6 L387.0 919.6 L387.0 920.4 L386.0 920.4 L386.0 920.4 L385.0 920.4 L385.0 921.4 L384.0 921.4 L384.0 920.4 L383.0 920.4 L383.0 920.4 L382.0 920.4 L382.0 919.6 L381.0 919.6 L381.0 920.4 L380.0 920.4 L380.0 920.4 L379.0 920.4 L379.0 920.4 L378.0 920.4 L378.0 920.4 L377.0 920.4 L377.0 920.4 L376.0 920.4 L376.0 920.4 L375.0 920.4 L375.0 921.4 L374.0 921.4 L374.0 920.4 L373.0 920.4 L373.0 920.4 L372.0 920.4 L372.0 920.4 L371.0 920.4 L371.0 920.4 L370.0 920.4 L370.0 920.4 L369.0 920.4 L369.0 922.9 L368.0 922.9 L368.0 922.9 L367.0 922.9 L367.0 919.6 L366.0 919.6 L366.0 920.4 L365.0 920.4 L365.0 920.4 L364.0 920.4 L364.0 920.4 L363.0 920.4 L363.0 921.4 L362.0 921.4 L362.0 920.4 L361.0 920.4 L361.0 920.4 L360.0 920.4 L360.0 920.4 L359.0 920.4 L359.0 920.4 L358.0 920.4 L358.0 920.4 L357.0 920.4 L357.0 919.6 L356.0 919.6 L356.0 921.9 L355.0 921.9 L355.0 919.6 L354.0 919.6 L354.0 920.4 L353.0 920.4 L353.0 920.4 L352.0 920.4 L352.0 920.4 L351.0 920.4 L351.0 921.4 L350.0 921.4 L350.0 922.9 L349.0 922.9 L349.0 920.4 L348.0 920.4 L348.0 920.4 L347.0 920.4 L347.0 921.9 L346.0 921.9 L346.0 920.4 L345.0 920.4 L345.0 921.4 L344.0 921.4 L344.0 920.4 L343.0 920.4 L343.0 919.6 L342.0 919.6 L342.0 921.4 L341.0 921.4 L341.0 919.6 L340.0 919.6 L340.0 922.9 L339.0 922.9 L339.0 921.9 L338.0 921.9 L338.0 919.6 L337.0 919.6 L337.0 920.4 L336.0 920.4 L336.0 922.4 L335.0 922.4 L335.0 920.4 L334.0 920.4 L334.0 919.6 L333.0 919.6 L333.0 921.4 L332.0 921.4 L332.0 920.4 L331.0 920.4 L331.0 919.6 L330.0 919.6 L330.0 920.4 L329.0 920.4 L329.0 920.4 L328.0 920.4 L328.0 920.4 L327.0 920.4 L327.0 920.4 L326.0 920.4 L326.0 920.4 L325.0 920.4 L325.0 920.4 L324.0 920.4 L324.0 922.4 L323.0 922.4 L323.0 920.4 L322.0 920.4 L322.0 919.6 L321.0 919.6 L321.0 922.9 L320.0 922.9 L320.0 920.4 L319.0 920.4 L319.0 920.4 L318.0 920.4 L318.0 921.4 L317.0 921.4 L317.0 920.4 L316.0 920.4 L316.0 921.4 L315.0 921.4 L315.0 920.4 L314.0 920.4 L314.0 922.4 L313.0 922.4 L313.0 922.9 L312.0 922.9 L312.0 919.6 L311.0 919.6 L311.0 920.4 L310.0 920.4 L310.0 920.4 L309.0 920.4 L309.0 920.4 L308.0 920.4 L308.0 920.4 L307.0 920.4 L307.0 920.4 L306.0 920.4 L306.0 920.4 L305.0 920.4 L305.0 920.4 L304.0 920.4 L304.0 920.4 L303.0 920.4 L303.0 922.9 L302.0 922.9 L302.0 922.9 L301.0 922.9 L301.0 920.4 L300.0 920.4 L300.0 920.4 L299.0 920.4 L299.0 920.4 L298.0 920.4 L298.0 920.4 L297.0 920.4 L297.0 920.4 L296.0 920.4 L296.0 920.4 L295.0 920.4 L295.0 920.4 L294.0 920.4 L294.0 920.4 L293.0 920.4 L293.0 920.4 L292.0 920.4 L292.0 922.9 L291.0 922.9 L291.0 920.4 L290.0 920.4 L290.0 920.4 L289.0 920.4 L289.0 920.4 L288.0 920.4 L288.0 919.6 L287.0 919.6 L287.0 920.4 L286.0 920.4 L286.0 920.4 L285.0 920.4 L285.0 920.4 L284.0 920.4 L284.0 920.4 L283.0 920.4 L283.0 920.4 L282.0 920.4 L282.0 920.4 L281.0 920.4 L281.0 921.9 L280.0 921.9 L280.0 920.4 L279.0 920.4 L279.0 922.9 L278.0 922.9 L278.0 921.4 L277.0 921.4 L277.0 919.6 L276.0 919.6 L276.0 920.4 L275.0 920.4 L275.0 920.4 L274.0 920.4 L274.0 921.4 L273.0 921.4 L273.0 920.4 L272.0 920.4 L272.0 920.4 L271.0 920.4 L271.0 920.4 L270.0 920.4 L270.0 919.6 L269.0 919.6 L269.0 920.4 L268.0 920.4 L268.0 922.9 L267.0 922.9 L267.0 920.4 L266.0 920.4 L266.0 920.4 L265.0 920.4 L265.0 919.6 L264.0 919.6 L264.0 919.6 L263.0 919.6 L263.0 920.4 L262.0 920.4 L262.0 920.4 L261.0 920.4 L261.0 921.4 L260.0 921.4 L260.0 920.4 L259.0 920.4 L259.0 920.4 L258.0 920.4 L258.0 921.4 L257.0 921.4 L257.0 922.4 L256.0 922.4 L256.0 920.4 L255.0 920.4 L255.0 919.6 L254.0 919.6 L254.0 920.4 L253.0 920.4 L253.0 920.4 L252.0 920.4 L252.0 920.4 L251.0 920.4 L251.0 920.4Z" fill="#3b5275"/><path d="M251 904H255.3L251 908.3Z" fill="#e0e0e0"/><path d="M251.2 908.3L255.3 904.2" stroke="#1e1e1e" stroke-width="0.9"/></svg><svg class="a" style="left:539px;top:904px" width="5" height="5" viewBox="0 0 5 5"><path d="M0.3 0H5V4.7Z" fill="#d8d8d8"/><path d="M0.3 0.3L4.7 4.7" stroke="#333" stroke-width="0.6"/></svg><div class="a" style="left:260px;top:907px;width:12px;height:11px;background:#686868;border:1px solid #bdb5ad"></div><svg class="a" style="left:260px;top:907px" width="12" height="11" viewBox="0 0 12 11"><g fill="none" stroke="#222" stroke-width="0.95"><path d="M2.2 10 Q3.8 9.8 4.6 5.5 Q5.4 1.8 7.8 2.2"/><path d="M3.5 4.3H6.5"/><path d="M5 4.6L9 8.8M5.3 8.8L9.5 4.3"/></g></svg>
<div class="a" style="left:250px;top:707px;width:1px;height:289px;background:#3b8ef0"></div>
<div class="a" style="left:90px;top:278px;width:514px;height:357px;border-radius:7px;background:#232323;box-shadow:0 3px 16px rgba(0,0,0,.3)"></div>
<div class="a" style="left:90px;top:307px;width:514px;height:328px;border-radius:0 0 7px 7px;background:#232323;border:1px solid rgba(96,96,96,.5)"></div>
<div class="a" style="left:91px;top:278px;width:512px;height:30px;border-radius:7px 7px 0 0;background:#eff3f8;box-shadow:inset 1px -1px 0 #fbfdff"></div>
<div class="a" style="left:91px;top:308px;width:512px;height:1px;background:#151515"></div>
<div class="a" style="left:92px;top:279px;width:0;height:0">
<div class="a" style="left:8px;top:6.5px;font-size:12px;color:#1a1a1a;line-height:16px">Color Picker</div>
<svg class="a" style="left:490px;top:7px" width="12" height="12" viewBox="0 0 12 12"><path d="M1 1L11 11M11 1L1 11" stroke="#222" stroke-width="1.1"/></svg>
<div class="a" style="left:12px;top:60px;width:258px;height:258px;border:1px solid #333;background:linear-gradient(to bottom,#000,rgba(0,0,0,0)),linear-gradient(to right,#fff,hsl(221,100%,50%))"></div>
<div class="a" style="left:180px;top:216px;width:12px;height:12px;border-radius:50%;border:1.5px solid #f0f0f0"></div>
<div class="a" style="left:282px;top:60px;width:20px;height:258px;border:1px solid #333;background:linear-gradient(to bottom,#f00 0%,#ff0 16.67%,#0f0 33.33%,#0ff 50%,#00f 66.67%,#f0f 83.33%,#f00 100%)"></div>
<svg class="a" style="left:275px;top:214px" width="6" height="9" viewBox="0 0 6 9"><path d="M0.7 0.6L4.5 4.3L0.7 8" fill="none" stroke="#a8a8a8" stroke-width="0.95"/></svg>
<svg class="a" style="left:303px;top:214px" width="6" height="9" viewBox="0 0 6 9"><path d="M4.6 0.6L0.8 4.3L4.6 8" fill="none" stroke="#a8a8a8" stroke-width="0.95"/></svg>
<div class="a" style="left:316px;top:60px;width:62px;height:70px;border:1px solid #333;background:#3456a1"></div>
<div class="a" style="left:411px;top:40px;width:95px;height:21px;border:1.5px solid #cfcfcf;border-radius:11px;color:#e6e6e6;font-size:11px;line-height:20px;text-align:center">OK</div>
<div class="a" style="left:411px;top:68px;width:95px;height:21px;border:1.5px solid #8a8a8a;border-radius:11px;color:#a0a0a0;font-size:11px;line-height:20px;text-align:center">Cancel</div>
<div class="a" style="left:318.7px;top:150.5px;width:12px;height:12px;border-radius:50%;background:#9a9a9a"></div><div class="a" style="left:335px;top:149.5px;font-size:10.5px;line-height:14px;color:#9a9a9a">H:</div><div class="a" style="left:359px;top:147.5px;font-size:11px;line-height:14px;color:#2f8ff0">221</div><div class="a" style="left:381px;top:147.5px;font-size:11px;line-height:14px;color:#9a9a9a">°</div>
<div class="a" style="left:317.7px;top:174.5px;width:14px;height:14px;border-radius:50%;border:2px solid #9a9a9a"></div><div class="a" style="left:335px;top:174.5px;font-size:10.5px;line-height:14px;color:#9a9a9a">S:</div><div class="a" style="left:359px;top:172.5px;font-size:11px;line-height:14px;color:#2f8ff0">68</div><div class="a" style="left:375px;top:172.5px;font-size:11px;line-height:14px;color:#9a9a9a">%</div>
<div class="a" style="left:317.7px;top:199.5px;width:14px;height:14px;border-radius:50%;border:2px solid #9a9a9a"></div><div class="a" style="left:335px;top:199.5px;font-size:10.5px;line-height:14px;color:#9a9a9a">B:</div><div class="a" style="left:359px;top:197.5px;font-size:11px;line-height:14px;color:#2f8ff0">63</div><div class="a" style="left:375px;top:197.5px;font-size:11px;line-height:14px;color:#9a9a9a">%</div>
<div class="a" style="left:317.7px;top:230.70000000000005px;width:14px;height:14px;border-radius:50%;border:2px solid #9a9a9a"></div><div class="a" style="left:335px;top:230.70000000000005px;font-size:10.5px;line-height:14px;color:#9a9a9a">R:</div><div class="a" style="left:359px;top:228.70000000000005px;font-size:11px;line-height:14px;color:#2f8ff0">52</div>
<div class="a" style="left:317.7px;top:255.70000000000005px;width:14px;height:14px;border-radius:50%;border:2px solid #9a9a9a"></div><div class="a" style="left:335px;top:255.70000000000005px;font-size:10.5px;line-height:14px;color:#9a9a9a">G:</div><div class="a" style="left:359px;top:253.70000000000005px;font-size:11px;line-height:14px;color:#2f8ff0">86</div>
<div class="a" style="left:317.7px;top:280.70000000000005px;width:14px;height:14px;border-radius:50%;border:2px solid #9a9a9a"></div><div class="a" style="left:335px;top:280.70000000000005px;font-size:10.5px;line-height:14px;color:#9a9a9a">B:</div><div class="a" style="left:359px;top:278.70000000000005px;font-size:11px;line-height:14px;color:#2f8ff0">161</div>
<div class="a" style="left:417.70000000000005px;top:149.5px;width:14px;height:14px;border-radius:50%;border:2px solid #9a9a9a"></div><div class="a" style="left:435px;top:149.5px;font-size:10.5px;line-height:14px;color:#9a9a9a">H:</div><div class="a" style="left:459px;top:147.5px;font-size:11px;line-height:14px;color:#2f8ff0">221</div><div class="a" style="left:481px;top:147.5px;font-size:11px;line-height:14px;color:#9a9a9a">°</div>
<div class="a" style="left:417.70000000000005px;top:174.5px;width:14px;height:14px;border-radius:50%;border:2px solid #9a9a9a"></div><div class="a" style="left:435px;top:174.5px;font-size:10.5px;line-height:14px;color:#9a9a9a">S:</div><div class="a" style="left:459px;top:172.5px;font-size:11px;line-height:14px;color:#2f8ff0">43</div><div class="a" style="left:475px;top:172.5px;font-size:11px;line-height:14px;color:#9a9a9a">%</div>
<div class="a" style="left:417.70000000000005px;top:199.5px;width:14px;height:14px;border-radius:50%;border:2px solid #9a9a9a"></div><div class="a" style="left:435px;top:199.5px;font-size:10.5px;line-height:14px;color:#9a9a9a">L:</div><div class="a" style="left:459px;top:197.5px;font-size:11px;line-height:14px;color:#2f8ff0">42</div><div class="a" style="left:475px;top:197.5px;font-size:11px;line-height:14px;color:#9a9a9a">%</div>
<div class="a" style="left:417.70000000000005px;top:230.70000000000005px;width:14px;height:14px;border-radius:50%;border:2px solid #9a9a9a"></div><div class="a" style="left:435px;top:230.70000000000005px;font-size:10.5px;line-height:14px;color:#9a9a9a">Y:</div><div class="a" style="left:459px;top:228.70000000000005px;font-size:11px;line-height:14px;color:#2f8ff0">88</div>
<div class="a" style="left:417.70000000000005px;top:255.70000000000005px;width:14px;height:14px;border-radius:50%;border:2px solid #9a9a9a"></div><div class="a" style="left:435px;top:255.70000000000005px;font-size:10.5px;line-height:14px;color:#9a9a9a">U:</div><div class="a" style="left:459px;top:253.70000000000005px;font-size:11px;line-height:14px;color:#2f8ff0">37</div>
<div class="a" style="left:417.70000000000005px;top:280.70000000000005px;width:14px;height:14px;border-radius:50%;border:2px solid #9a9a9a"></div><div class="a" style="left:435px;top:280.70000000000005px;font-size:10.5px;line-height:14px;color:#9a9a9a">V:</div><div class="a" style="left:459px;top:278.70000000000005px;font-size:11px;line-height:14px;color:#2f8ff0">-21</div>
<div class="a" style="left:320px;top:316px;font-size:10px;color:#9a9a9a">#</div>
<div class="a" style="left:339px;top:311px;width:56px;height:18px;background:#161616;border:1px solid #2c2c2c;border-radius:2px;color:#c4c4c4;font-size:11px;line-height:15px;padding-left:4px">3456A1</div>
<div class="a" style="left:420px;top:313.5px;width:19px;height:10px;background:#3456a1;border:1px solid #2a3a5a"></div>
<svg class="a" style="left:-92px;top:-279px" width="700" height="700" viewBox="0 0 700 700"><g transform="translate(537.2,604) rotate(45)" fill="#b8b8b8"><path d="M-1.7 -9V-1.8A1.7 1.7 0 0 0 1.7 -1.8V-9" fill="none" stroke="#b8b8b8" stroke-width="1.2"/><rect x="-3.4" y="-10.6" width="6.8" height="2.3"/><rect x="-2.4" y="-16.8" width="4.8" height="7.2" rx="2.4"/></g></svg>
<div class="a" style="left:11px;top:329px;width:14px;height:14px;border:2px solid #a8a8a8;border-radius:2px"></div>
<div class="a" style="left:29px;top:329px;font-size:11px;color:#a0a0a0;line-height:14px">Only Web Colors</div>
</div>
<div class="a" style="left:603px;top:613px;width:3px;height:3px;background:#555"></div>
<div class="a" style="left:567.6px;top:316.4px;width:24px;height:24px;border-radius:50%;background:#fff"></div><div class="a" style="left:570.35px;top:319.15px;width:18.5px;height:18.5px;border-radius:50%;background:#c40000"></div><div class="a" style="left:570.35px;top:319.95px;width:18.5px;height:18.5px;color:#fff;font-family:'Liberation Sans',sans-serif;font-weight:normal;font-size:13.5px;line-height:18.5px;text-align:center">2</div>
<div class="a" style="left:472.3px;top:589.3px;width:24px;height:24px;border-radius:50%;background:#fff"></div><div class="a" style="left:475.05px;top:592.05px;width:18.5px;height:18.5px;border-radius:50%;background:#c40000"></div><div class="a" style="left:475.05px;top:592.8499999999999px;width:18.5px;height:18.5px;color:#fff;font-family:'Liberation Serif',serif;font-weight:bold;font-size:13px;line-height:18.5px;text-align:center">1</div>
<div class="a" style="left:277.3px;top:830.3px;width:24px;height:24px;border-radius:50%;background:#fff"></div><div class="a" style="left:280.05px;top:833.05px;width:18.5px;height:18.5px;border-radius:50%;background:#c40000"></div><div class="a" style="left:280.05px;top:833.8499999999999px;width:18.5px;height:18.5px;color:#fff;font-family:'Liberation Sans',sans-serif;font-weight:bold;font-size:12.5px;line-height:18.5px;text-align:center">3</div>
<svg class="a" style="left:0;top:0" width="120" height="420" viewBox="0 0 120 420"><path d="M71.1 371.6V387.4L74.8 383.9L77.6 389.6L79.9 388.7L77.3 383.1H82.7Z" fill="#fff" stroke="#000" stroke-width="1.2" stroke-linejoin="round"/></svg>
</body></html>
